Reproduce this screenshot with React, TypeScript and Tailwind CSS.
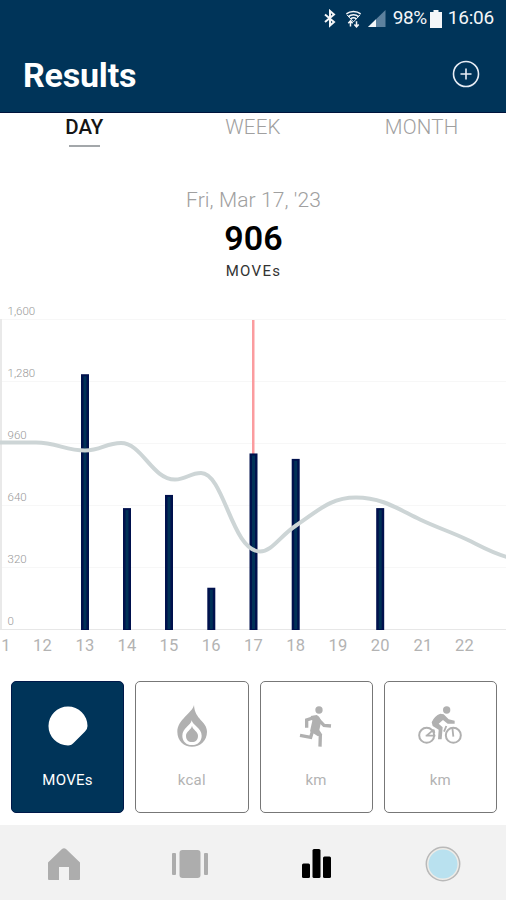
import type { ReactNode } from "react";

type Tab = { label: string; active?: boolean };
type Metric = { id: string; unit: string; icon: ReactNode; active?: boolean };

const tabs: Tab[] = [
  { label: "DAY", active: true },
  { label: "WEEK" },
  { label: "MONTH" },
];

// Chart geometry
const CHART_TOP = 19;
const CHART_BASE = 329;
const MAX_VALUE = 1600;
const gridValues = [1600, 1280, 960, 640, 320, 0];

const days = [
  { day: "1", x: 6, moves: 0 },
  { day: "12", x: 42.5, moves: 0 },
  { day: "13", x: 85, moves: 1315 },
  { day: "14", x: 127, moves: 624 },
  { day: "15", x: 169, moves: 692 },
  { day: "16", x: 211.3, moves: 213 },
  { day: "17", x: 253.5, moves: 906 },
  { day: "18", x: 295.7, moves: 878 },
  { day: "19", x: 338, moves: 0 },
  { day: "20", x: 380.2, moves: 624 },
  { day: "21", x: 423, moves: 0 },
  { day: "22", x: 464.5, moves: 0 },
];

const yFor = (value: number) =>
  CHART_BASE - (value / MAX_VALUE) * (CHART_BASE - CHART_TOP);

function StatusBar() {
  return (
    <div className="flex h-[37px] items-center justify-end pr-[12px] text-[19px] text-[#f4f6f8]">
      <svg className="mr-[9px] h-[19px] w-[12px]" viewBox="0 0 12 19" fill="none" stroke="currentColor" strokeWidth="2">
        <path d="M1 5.500 10 13 6 16.500V2l4 3.500L1 13" />
      </svg>
      <svg className="mr-[6px] h-[20px] w-[17px]" viewBox="0 0 18 20" fill="none" stroke="currentColor" strokeWidth="1.600">
        <path d="M1.500 4.500C5.500 1.200 12.500 1.200 16.500 4.500M3.500 7.500c3.200-2.800 7.800-2.800 11 0M5.800 10c2-1.700 4.400-1.700 6.400 0" />
        <path d="M2 5.500 9 13l7-7.500" strokeWidth="1" />
        <path d="M5.800 18v-5.500M3.500 14.500l2.300-2.500 2.300 2.500M12.200 12.500V18M9.900 15.800l2.300 2.500 2.300-2.500" />
      </svg>
      <svg className="mr-[7px] h-[18px] w-[18px]" viewBox="0 0 18 18">
        <path d="M17.500 0v17H0z" fill="#5d819e" />
        <path d="M8 9.300V17H0z" fill="currentColor" />
      </svg>
      <span className="w-[34px] tracking-[-0.4px]">98%</span>
      <svg className="ml-[3px] mr-[6px] h-[18px] w-[12px]" viewBox="0 0 12 18" fill="currentColor">
        <path d="M3.500 0h5v2H12v16H0V2h3.500z" />
      </svg>
      <span className="tracking-[-0.2px]">16:06</span>
    </div>
  );
}

function Header() {
  return (
    <header className="h-[113px] shrink-0 border-b border-[#00143c] bg-[#003459]">
      <StatusBar />
      <div className="flex h-[75px] items-center justify-between pt-[2px] pl-[23px] pr-[26px]">
        <h1 className="text-[34px] font-bold tracking-[-0.2px] text-white">Results</h1>
        <button aria-label="Add" className="-mt-[4px] text-[#e8edf5]">
          <svg width="28" height="28" viewBox="0 0 28 28" fill="none" stroke="currentColor">
            <circle cx="14" cy="14" r="12.500" strokeWidth="1.600" />
            <path d="M14 8.500v11M8.500 14h11" strokeWidth="1.600" />
          </svg>
        </button>
      </div>
    </header>
  );
}

function Tabs() {
  return (
    <nav className="grid h-[36px] grid-cols-3 text-center text-[20.500px]">
      {tabs.map((tab) => (
        <div key={tab.label} className="flex flex-col items-center">
          <span
            className={
              tab.active
                ? "h-[32px] text-[20.500px] leading-[28px] font-medium text-[#151515]"
                : "leading-[28px] font-light tracking-[0.2px] text-[#a0a0a0]"
            }
          >
            {tab.label}
          </span>
          {tab.active && <span className="h-[2px] w-[31px] bg-[#a3a7aa]" />}
        </div>
      ))}
    </nav>
  );
}

function Summary() {
  return (
    <section className="flex h-[151px] flex-col items-center pt-[38px]">
      <p className="pl-px text-[21px] leading-[27px] font-light tracking-[0.1px] text-[#a0a0a0]">Fri, Mar 17, &apos;23</p>
      <p className="mt-[4px] pl-px text-[34px] leading-[40px] font-semibold text-black">906</p>
      <p className="mt-[3px] pl-px text-[15px] leading-[20px] tracking-[1.3px] text-[#333]">MOVEs</p>
    </section>
  );
}

function Chart() {
  return (
    <svg className="block shrink-0" width="506" height="363" viewBox="0 0 506 363" role="img" aria-label="MOVEs per day">
      {/* Grid and scale */}
      {gridValues.map((value) => (
        <g key={value}>
          <line
            x1="0"
            x2="506"
            y1={yFor(value) + 0.5}
            y2={yFor(value) + 0.5}
            stroke={value === 0 ? "#e7e7e7" : "#f7f7f7"}
          />
          <text x="7.500" y={yFor(value) - 4} fontSize="11.500" fontWeight="300" fill="#989898">
            {value.toLocaleString("en-US")}
          </text>
        </g>
      ))}
      <line x1="1" x2="1" y1={CHART_TOP} y2={CHART_BASE} stroke="#e9e9e9" strokeWidth="2" />

      {/* Selected day */}
      <rect x="252" y={CHART_TOP + 1} width="2.500" height={CHART_BASE - CHART_TOP} fill="#fb9c9f" />

      {/* Bars */}
      {days
        .filter((d) => d.moves > 0)
        .map((d) => (
          <g key={d.day}>
            <rect x={d.x - 4} y={yFor(d.moves)} width="8" height={CHART_BASE - yFor(d.moves) + 1} fill="#00114d" />
            <rect x={d.x - 1.500} y={yFor(d.moves) + 2} width="3" height={CHART_BASE - yFor(d.moves) - 2} fill="#003157" />
          </g>
        ))}

      {/* Trend */}
      <path
        d="M-2 142.500H36C56 142.500 66 150.500 85 150.500C101 150.500 106 143 121 143C142 143 152 179.500 175 179.500C186 179.500 190 173 201 173C224 173 232 251.500 260 251.500C272 251.500 280 236 296 225.500C318 211 330 197.500 356 197.500C382 197.500 398 209 420 219.500C438 228 450 231.500 468 240C482 247 492 253 507 257"
        fill="none"
        stroke="#cdd5d6"
        strokeWidth="4"
      />

      {/* Day labels */}
      {days.map((d) => (
        <text key={d.day} x={d.x} y="351" fontSize="16.500" textAnchor="middle" letterSpacing="0.200" fill="#b3b3b3">
          {d.day}
        </text>
      ))}
    </svg>
  );
}

const MovesIcon = () => (
  <svg width="40" height="40" viewBox="0 0 40 40" fill="#fff">
    <path d="M20 .5A19.500 19.500 0 1 0 20 39.500Q23.500 39.500 26.500 36L37 25.500Q39.500 23 39.500 20A19.500 19.500 0 0 0 20 .5z" />
  </svg>
);

const FlameIcon = () => (
  <svg width="44" height="44" viewBox="508 103 132 132">
    <path d="M580 106C575 130 530 150 530 186C530 214 550 231 574 231S619 214 619 186C619 155 582 150 580 106z" fill="#b0b0b0" />
    <path d="M573 152C571 167 545 176 545 198C545 215 557 226 574 226S603 215 603 198C603 176 576 167 573 152z" fill="#fff" />
    <path d="M574 168C572 180 556 185 556 198C556 210 563 217 574 217S592 210 592 198C592 185 576 180 574 168z" fill="#b0b0b0" />
  </svg>
);

const RunIcon = () => (
  <svg width="44" height="44" viewBox="122 103 132 132" fill="none" stroke="#b0b0b0">
    <circle cx="197" cy="121" r="11" fill="#b0b0b0" stroke="none" />
    <path d="M160 174V151L184 143" strokeWidth="10" />
    <path d="M192 146L212 167L233 169" strokeWidth="10" />
    <path d="M172 139L190 136Q203 143 203 158L198 181L207 195L194 200L170 185L177 153z" fill="#b0b0b0" stroke="none" />
    <path d="M178 183L172 203L140 197M186 184L201 197L200 231" strokeWidth="10" />
  </svg>
);

const BikeIcon = () => (
  <svg width="44" height="44" viewBox="496 103 132 132" fill="none" stroke="#b0b0b0">
    <circle cx="582" cy="121" r="11" fill="#b0b0b0" stroke="none" />
    <circle cx="522" cy="197" r="22.500" strokeWidth="6" />
    <circle cx="602" cy="197" r="22.500" strokeWidth="6" />
    <path d="M537 158Q545 138 563 132L573 134L588 149L606 153V162H585L571 151L558 162L570 173L567 209H556L558 180L540 169z" fill="#b0b0b0" stroke="none" />
    <path d="M522 198L543 180M519 198H548M543 180L545 190M574 186L581 169M599 173L602 201" strokeWidth="5.500" />
  </svg>
);

const metrics: Metric[] = [
  { id: "moves", unit: "MOVEs", icon: <MovesIcon />, active: true },
  { id: "kcal", unit: "kcal", icon: <FlameIcon /> },
  { id: "run", unit: "km", icon: <RunIcon /> },
  { id: "bike", unit: "km", icon: <BikeIcon /> },
];

function MetricCards() {
  return (
    <section className="grid h-[162px] shrink-0 grid-cols-4 gap-[11px] pt-[18px] pr-[9px] pl-[11px]">
      {metrics.map((metric) => (
        <button
          key={metric.id}
          className={
            metric.active
              ? "flex h-[132px] flex-col items-center rounded-[5px] border border-[#00194a] bg-[#003459] text-white"
              : "flex h-[132px] flex-col items-center rounded-[5px] border border-[#777] bg-white text-[#b3b3b3]"
          }
        >
          <span className="mt-[21px] flex h-[46px] items-center">{metric.icon}</span>
          <span className="mt-[21px] text-[15px] leading-[20px] tracking-[0.3px]">{metric.unit}</span>
        </button>
      ))}
    </section>
  );
}

function BottomNav() {
  return (
    <nav className="grid h-[75px] shrink-0 grid-cols-4 place-items-center bg-[#f2f2f2] pt-[2px] pl-[1px]">
      <svg width="34" height="34" viewBox="0 0 34 34" fill="#adadad">
        <path d="M1 15.500 15 2q2-1.500 4 0l14 13.500V32q0 1-1 1H22V20H12v13H2q-1 0-1-1z" />
      </svg>
      <svg width="36" height="30" viewBox="0 0 36 30" fill="#adadad">
        <rect x="7.500" y="1" width="21" height="28" rx="3" />
        <rect x="0" y="4" width="4" height="22" rx="1" />
        <rect x="32" y="4" width="4" height="22" rx="1" />
      </svg>
      <svg width="29" height="29" viewBox="0 0 29 29" fill="#000">
        <rect x="0" y="14.500" width="8" height="14.500" rx="1.500" />
        <rect x="10.500" y="0" width="8" height="29" rx="1.500" />
        <rect x="21" y="7.500" width="8" height="21.500" rx="1.500" />
      </svg>
      <svg width="36" height="36" viewBox="0 0 36 36">
        <circle cx="18" cy="18" r="16.700" fill="#eeece8" stroke="#b9b9b9" strokeWidth="1.500" />
        <circle cx="18" cy="18" r="14.500" fill="#b9e1ef" />
      </svg>
    </nav>
  );
}

export default function App() {
  return (
    <main className="flex h-[900px] w-[506px] flex-col overflow-hidden bg-white font-['Roboto',sans-serif]">
      <Header />
      <Tabs />
      <Summary />
      <Chart />
      <MetricCards />
      <BottomNav />
    </main>
  );
}
